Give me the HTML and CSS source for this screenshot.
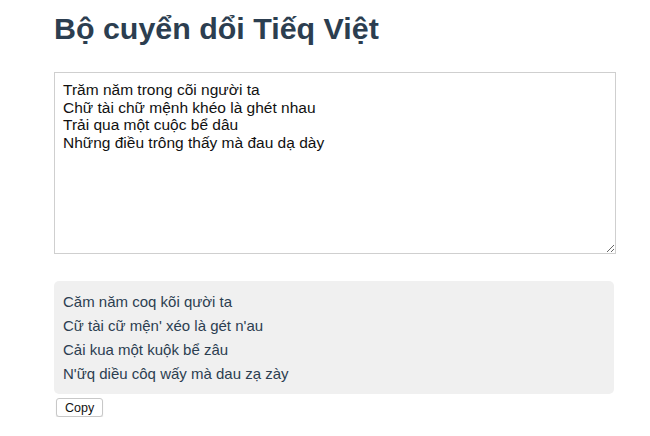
FILE: index.html
```html
<!DOCTYPE html>
<html lang="vi">
<head>
<meta charset="utf-8">
<title>Bộ cuyển dổi Tiếq Việt</title>
<link rel="stylesheet" href="styles.css">
</head>
<body>
<main class="app">
  <h1 class="title">Bộ cuyển dổi Tiếq Việt</h1>
  <textarea class="input" spellcheck="false">Trăm năm trong cõi người ta
Chữ tài chữ mệnh khéo là ghét nhau
Trải qua một cuộc bể dâu
Những điều trông thấy mà đau dạ dày</textarea>
  <div class="output">
    <p class="line">Căm năm coq kõi qười ta</p>
    <p class="line">Cữ tài cữ mện' xéo là gét n'au</p>
    <p class="line">Cải kua một kuộk bể zâu</p>
    <p class="line">N'ữq diều côq wấy mà dau zạ zày</p>
  </div>
  <button class="copy" type="button">Copy</button>
</main>
</body>
</html>
```

FILE: styles.css
```css
html, body {
  margin: 0;
  padding: 0;
  background: #ffffff;
}

body {
  font-family: "Liberation Sans", Arial, sans-serif;
}

.app {
  display: flex;
  flex-direction: column;
  align-items: flex-start;
  padding-left: 54px;
  width: 562px;
}

.title {
  margin: 11px 0 26px 0;
  font-size: 30.4px;
  font-weight: bold;
  line-height: 35px;
  color: #2c3e50;
}

.input {
  box-sizing: border-box;
  width: 562px;
  height: 182px;
  margin: 0;
  padding: 8px 8px;
  border: 1px solid #cfcfcf;
  font-family: "Liberation Sans", Arial, sans-serif;
  font-size: 15.5px;
  line-height: 17.7px;
  color: #111111;
  resize: vertical;
  outline: none;
}

.output {
  box-sizing: border-box;
  width: 560px;
  margin-top: 27px;
  padding: 9px 9px 8px 9px;
  background: #f0f0f0;
  border-radius: 5px;
  color: #2c3e50;
  font-size: 15px;
  line-height: 24px;
}

.line {
  margin: 0;
}

.copy {
  margin: 4px 0 0 2px;
  padding: 1px 8px;
  height: 19px;
  font-family: "Liberation Sans", Arial, sans-serif;
  font-size: 12.5px;
  color: #111111;
  background: #ffffff;
  border: 1px solid #c8c8c8;
  border-radius: 3px;
  box-shadow: 0 1px 1px rgba(0,0,0,0.12);
}
```
